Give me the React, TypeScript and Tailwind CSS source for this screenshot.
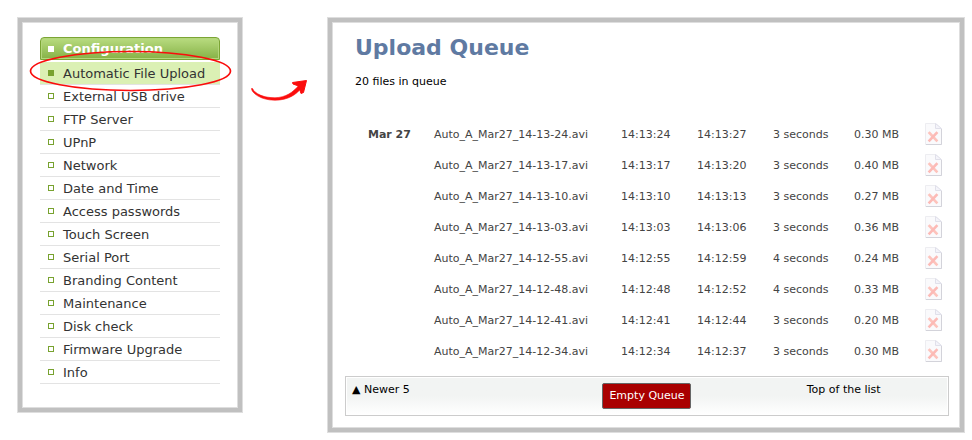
import React from 'react';

interface QueueFile {
  name: string;
  start: string;
  end: string;
  duration: string;
  size: string;
}

const menuItems = [
  'Automatic File Upload',
  'External USB drive',
  'FTP Server',
  'UPnP',
  'Network',
  'Date and Time',
  'Access passwords',
  'Touch Screen',
  'Serial Port',
  'Branding Content',
  'Maintenance',
  'Disk check',
  'Firmware Upgrade',
  'Info',
];

const files: QueueFile[] = [
  { name: 'Auto_A_Mar27_14-13-24.avi', start: '14:13:24', end: '14:13:27', duration: '3 seconds', size: '0.30 MB' },
  { name: 'Auto_A_Mar27_14-13-17.avi', start: '14:13:17', end: '14:13:20', duration: '3 seconds', size: '0.40 MB' },
  { name: 'Auto_A_Mar27_14-13-10.avi', start: '14:13:10', end: '14:13:13', duration: '3 seconds', size: '0.27 MB' },
  { name: 'Auto_A_Mar27_14-13-03.avi', start: '14:13:03', end: '14:13:06', duration: '3 seconds', size: '0.36 MB' },
  { name: 'Auto_A_Mar27_14-12-55.avi', start: '14:12:55', end: '14:12:59', duration: '4 seconds', size: '0.24 MB' },
  { name: 'Auto_A_Mar27_14-12-48.avi', start: '14:12:48', end: '14:12:52', duration: '4 seconds', size: '0.33 MB' },
  { name: 'Auto_A_Mar27_14-12-41.avi', start: '14:12:41', end: '14:12:44', duration: '3 seconds', size: '0.20 MB' },
  { name: 'Auto_A_Mar27_14-12-34.avi', start: '14:12:34', end: '14:12:37', duration: '3 seconds', size: '0.30 MB' },
];

const panel =
  'border-4 border-[#c0c0c0] bg-white shadow-[0_0_0_1px_#dedede,inset_0_0_0_1px_#dedede]';

const DeleteIcon: React.FC = () => (
  <svg width="18" height="22" viewBox="0 0 18 22" fill="none" className="block">
    <path d="M.5 .5H11L16.5 6V21.5H.5Z" fill="#fafafc" stroke="#ededf1" />
    <path d="M16.500 6V21.500H1" stroke="#d3d3da" />
    <path d="M10.500 .5V5.500H16.500Z" fill="#f4f4fa" stroke="#e0e0ea" />
    <path d="M4.500 10L11.500 17.500" stroke="#fdc3bc" strokeWidth="2.6" strokeLinecap="square" />
    <path d="M11.500 10L4.500 17.500" stroke="#fcbab6" strokeWidth="2.6" strokeLinecap="square" />
  </svg>
);

const Sidebar: React.FC = () => (
  <nav className={`${panel} w-56 shrink-0 px-[18px] pt-[15px] pb-6`}>
    <div className="relative">
      <h2 className="mb-0.5 flex h-[23px] items-center rounded-t-[4px] border border-[#7ba534] bg-linear-to-b from-[#b9dc80] to-[#86b246] pl-[7px] text-[13px] font-bold text-white shadow-[inset_0_0_0_1px_#b4d67c]">
        <span className="mr-[9px] size-1.5 bg-white"></span>
        <span className="pt-px">Configuration</span>
      </h2>
      <ul>
        {menuItems.map((item, idx) => (
          <li key={item} className="border-b border-[#e3e3e3]">
            <a
              href="#"
              className={`flex h-[22px] items-center pl-2 text-[13px] text-[#333] ${idx === 0 ? 'bg-[#dbf0b4]' : ''}`}
            >
              <span
                className={`mr-[9px] size-1.5 border border-[#78a22f] ${idx === 0 ? 'bg-[#78a22f]' : ''}`}
              ></span>
              <span className="pt-0.5">{item}</span>
            </a>
          </li>
        ))}
      </ul>
      <svg
        className="pointer-events-none absolute top-[13px] -left-[11px]"
        width="203"
        height="42"
        viewBox="0 0 203 42"
        fill="none"
      >
        <ellipse cx="101.5" cy="21" rx="100" ry="19.5" stroke="#fa0c0c" strokeWidth="1.7" />
      </svg>
    </div>
  </nav>
);

const Arrow: React.FC = () => (
  <div className="w-[86px] shrink-0 pt-[60px] pl-2">
    <svg width="60" height="26" viewBox="0 0 60 26" fill="none">
      <path
        d="M1.500 10.500C1.500 14.500 10 22.200 25 22.200C38 22.200 47 16.500 52 9L49 7C43 14.500 36 19.300 25 19.800C14 19.800 5 16 2.500 10.500Z"
        fill="#fb0d0d"
        stroke="#fb0d0d"
        strokeWidth=".6"
        strokeLinejoin="round"
      />
      <path d="M56.500 2.500L42.500 4.500L43 6L48.500 8L51 15.500L53.500 14.500Z" fill="#fb0d0d" stroke="#fb0d0d" strokeLinejoin="round" />
    </svg>
  </div>
);

const UploadQueue: React.FC = () => (
  <main className={`${panel} min-w-0 grow px-[11px] pt-3 pb-3`}>
    <h1 className="ml-3 text-[22px] leading-7 font-bold text-[#5f7aa2]">Upload Queue</h1>
    <p className="mt-3 ml-3 text-[11px] leading-4 text-black">20 files in queue</p>
    <table className="mt-7 ml-[13px] border-collapse text-left text-[11px] whitespace-nowrap text-[#444]">
      <tbody>
        {files.map((file, idx) => (
          <tr key={file.name} className="h-[31px]">
            <th className="w-[66px] pt-1 pl-3 font-bold">{idx === 0 ? 'Mar 27' : ''}</th>
            <td className="w-[187px] pt-1 pl-3">{file.name}</td>
            <td className="w-[76px] pt-1 pl-3">{file.start}</td>
            <td className="w-[76px] pt-1 pl-3">{file.end}</td>
            <td className="w-[81px] pt-1 pl-3">{file.duration}</td>
            <td className="w-[71px] pt-1 pl-3">{file.size}</td>
            <td className="pl-3">
              <button type="button" aria-label={`Delete ${file.name}`} className="block">
                <DeleteIcon />
              </button>
            </td>
          </tr>
        ))}
      </tbody>
    </table>
    <div className="mt-2.5 ml-0.5 grid grid-cols-3 border border-[#ccc] bg-linear-to-b from-[#f2f4f3] from-50% to-white px-1.5 py-[5px] text-[11px] text-black shadow-[inset_0_0_0_1px_#fff]">
      <a href="#" className="justify-self-start">▲ Newer 5</a>
      <button
        type="button"
        className="my-px h-[26px] min-w-[89px] justify-self-center rounded-[2px] border border-[#666] bg-[#a90000] px-1 font-medium whitespace-nowrap text-white"
      >
        Empty Queue
      </button>
      <a href="#" className="justify-self-center">Top of the list</a>
    </div>
  </main>
);

const App: React.FC = () => {
  return (
    <div className="flex items-start bg-white pt-[18px] pr-2 pb-2 pl-[18px] font-['DejaVu_Sans',sans-serif]">
      <Sidebar />
      <Arrow />
      <UploadQueue />
    </div>
  );
};

export default App;
